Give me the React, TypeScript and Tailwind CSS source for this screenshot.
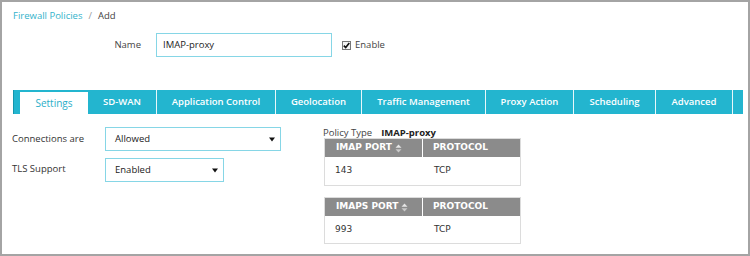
import React from 'react'

const TABS = [
  { label: 'Settings', w: 'w-[68px]' },
  { label: 'SD-WAN', w: 'w-[69px]' },
  { label: 'Application Control', w: 'w-[119px]' },
  { label: 'Geolocation', w: 'w-[86px]' },
  { label: 'Traffic Management', w: 'w-[124px]' },
  { label: 'Proxy Action', w: 'w-[88px]' },
  { label: 'Scheduling', w: 'w-[82px]' },
  { label: 'Advanced', w: 'w-[77px]' },
]

function SortIcon() {
  return (
    <svg width="7" height="9" viewBox="0 0 7 9" className="ml-[3px] inline-block">
      <path d="M3.5 0.5 L6.5 3.8 H0.5 Z" fill="#e6e6e6" />
      <path d="M3.5 8.5 L6.5 5.2 H0.5 Z" fill="#c9c9c9" />
    </svg>
  )
}

function Caret() {
  return (
    <svg width="6" height="5" viewBox="0 0 6 5">
      <path d="M0 0.5 H6 L3 4.5 Z" fill="#111" />
    </svg>
  )
}

function PortTable({ port, value, bodyH }: { port: string; value: string; bodyH: string }) {
  return (
    <div className="w-[197px] border border-[#dcdcdc]">
      <div className="flex h-[18px] bg-[#8b8b8b] text-white font-bold text-[9px] [font-family:'DejaVu_Sans',sans-serif]">
        <div className="w-[98px] flex items-center pl-[11px] border-r border-white">
          {port}
          <SortIcon />
        </div>
        <div className="flex-1 flex items-center pl-[10px]">PROTOCOL</div>
      </div>
      <div className={`flex ${bodyH} items-center text-[9px] text-[#333] [font-family:'DejaVu_Sans',sans-serif]`}>
        <div className="w-[98px] pl-[10px]">{value}</div>
        <div className="flex-1 pl-[11px]">TCP</div>
      </div>
    </div>
  )
}

export default function App() {
  return (
    <div className="w-[750px] h-[256px] border-2 border-[#a4a4a4] bg-white overflow-hidden text-[9.5px] text-[#333] [font-family:'Open_Sans',sans-serif]">
      {/* Breadcrumb */}
      <div className="flex items-center h-[14px] mt-[7px] pl-[11px] gap-[6px]">
        <span className="text-[#33b3cb]">Firewall Policies</span>
        <span className="text-[#999]">/</span>
        <span className="text-[#444]">Add</span>
      </div>

      {/* Name row */}
      <div className="flex items-center mt-[10px] h-[24px]">
        <div className="w-[139px] text-right text-[#444]">Name</div>
        <div className="ml-[15px] w-[176px] h-[24px] border border-[#86d6e6] flex items-center pl-[6px] text-[#222]">
          IMAP-proxy
        </div>
        <div className="ml-[10px] flex items-center gap-[4px] text-[#444]">
          <span className="w-[9px] h-[9px] border border-[#777] bg-[#f4f4f4] flex items-center justify-center">
            <svg width="7" height="7" viewBox="0 0 7 7">
              <path d="M0.8 3.6 L2.7 5.6 L6.3 1" stroke="#111" strokeWidth="1.6" fill="none" />
            </svg>
          </span>
          Enable
        </div>
      </div>

      {/* Tabs */}
      <div className="flex mt-[33px] ml-[11px] h-[24px] w-[730px] bg-[#23b5cf]">
        <div className="w-[7px] border-l border-[#1496ad]" />
        {TABS.map((t, i) =>
          i === 0 ? (
            <div
              key={t.label}
              className={`${t.w} bg-white border-t-2 border-[#23b5cf] flex items-center justify-center text-[#2aaec8] text-[10px]`}
            >
              {t.label}
            </div>
          ) : (
            <div
              key={t.label}
              className={`${t.w} border-r border-[#e8f7fa] flex items-center justify-center text-white font-semibold text-[9.5px]`}
            >
              {t.label}
            </div>
          )
        )}
      </div>

      {/* Content */}
      <div className="flex mt-[13px]">
        <div className="pl-[10px]">
          <div className="flex h-[24px]">
            <div className="w-[93px] pt-[5px]">Connections are</div>
            <div className="w-[176px] h-[24px] border border-[#86d6e6] flex items-center justify-between pl-[9px] pr-[5px] text-[#222]">
              Allowed
              <Caret />
            </div>
          </div>
          <div className="flex h-[24px] mt-[7px]">
            <div className="w-[93px] pt-[4px]">TLS Support</div>
            <div className="w-[119px] h-[24px] border border-[#86d6e6] flex items-center justify-between pl-[9px] pr-[5px] text-[#222]">
              Enabled
              <Caret />
            </div>
          </div>
        </div>

        <div className="ml-[43px] -mt-[3px]">
          <div className="flex items-end h-[14px] gap-[9px] leading-[11px]">
            <span className="text-[#444] ml-[-1px]">Policy Type</span>
            <span className="font-bold text-[#222]">IMAP-proxy</span>
          </div>
          <PortTable port="IMAP PORT" value="143" bodyH="h-[28px]" />
          <div className="h-[11px]" />
          <PortTable port="IMAPS PORT" value="993" bodyH="h-[27px]" />
        </div>
      </div>
    </div>
  )
}
